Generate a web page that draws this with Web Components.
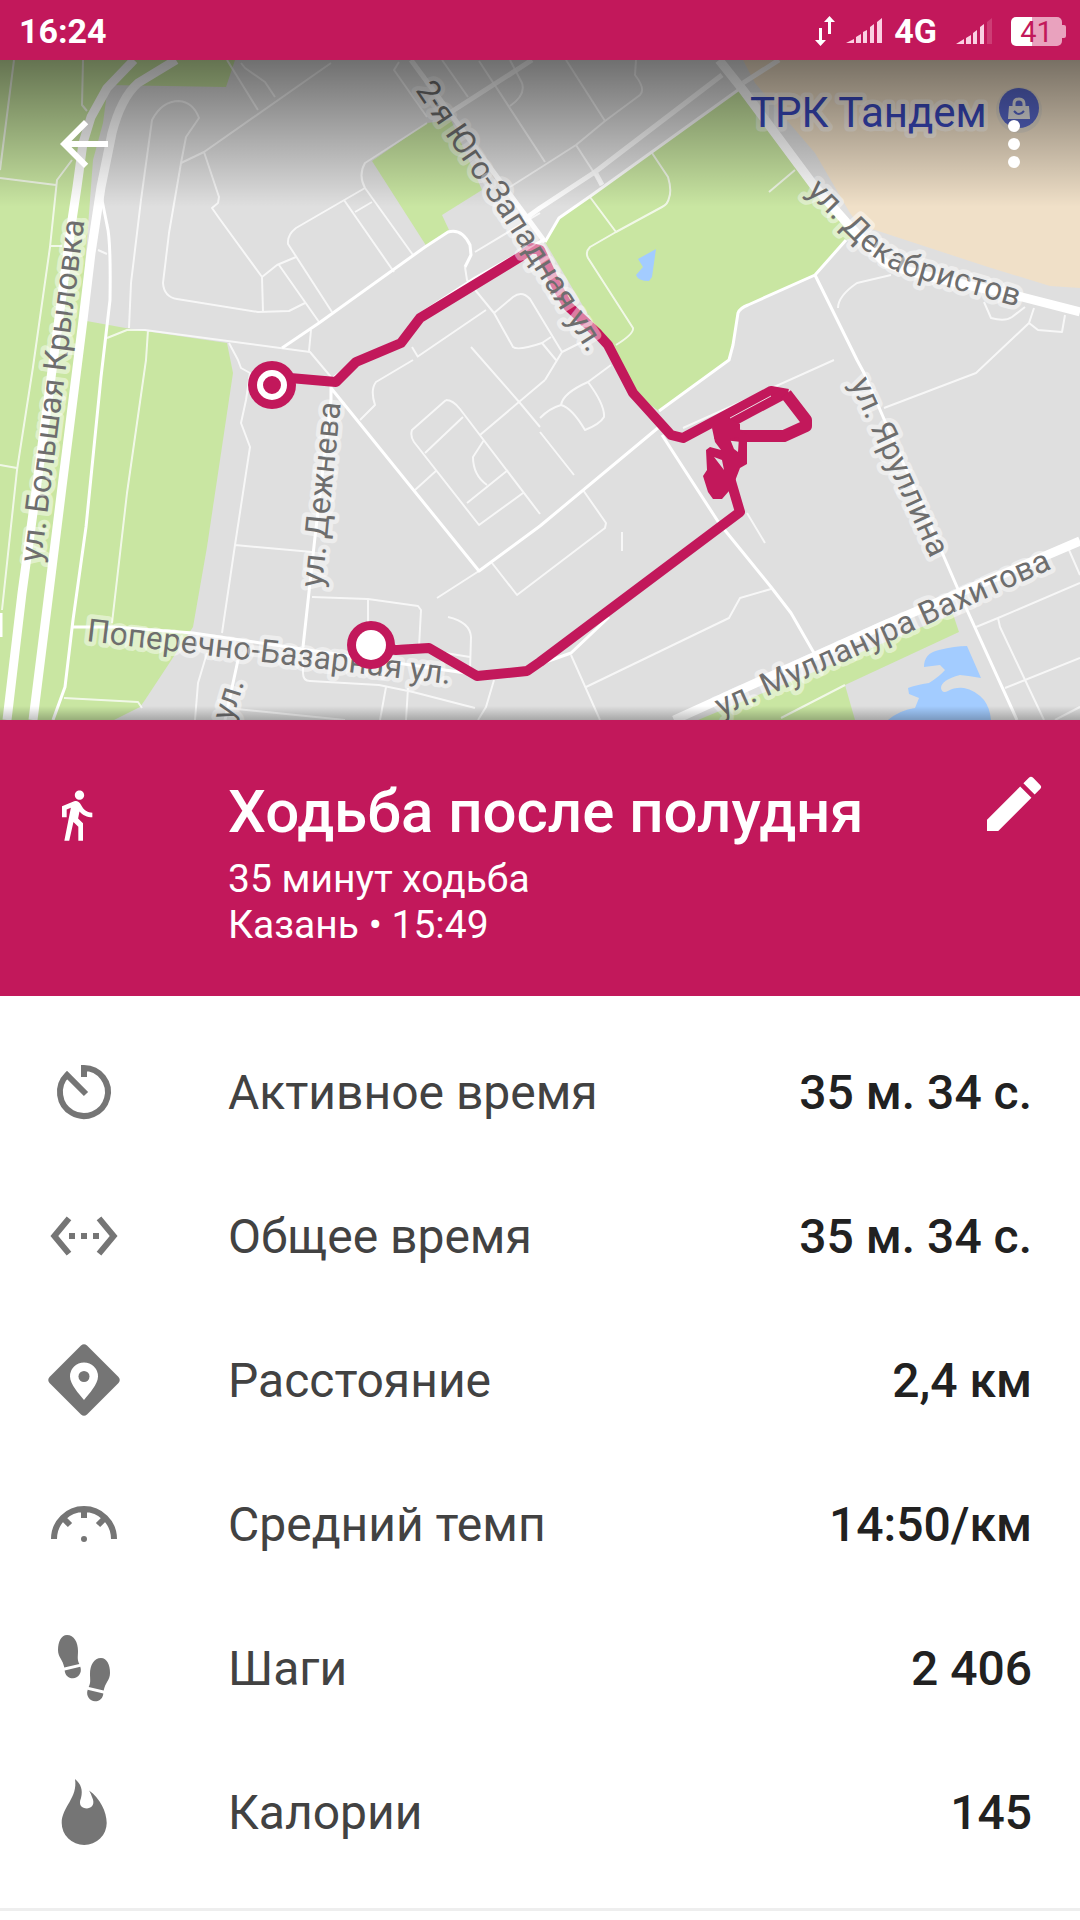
<!DOCTYPE html>
<html lang="ru">
<head>
<meta charset="utf-8">
<meta name="viewport" content="width=device-width, initial-scale=1">
<title>Ходьба после полудня</title>
<style>
  body {
    margin: 0;
    background: #fff;
    color: #212121;
    font-family: Roboto, "Noto Sans", sans-serif;
    --accent: #c2185b;
  }
</style>
</head>
<body>

<activity-page>
  <status-bar slot="status" time="16:24" network="4G" battery="41"></status-bar>
  <route-map slot="map"></route-map>
  <activity-header slot="header">
    <span slot="title">Ходьба после полудня</span>
    <span slot="duration">35 минут ходьба</span>
    <span slot="place">Казань • 15:49</span>
  </activity-header>
  <stat-row icon="timer"><span>Активное время</span><span slot="value">35 м. 34 с.</span></stat-row>
  <stat-row icon="span"><span>Общее время</span><span slot="value">35 м. 34 с.</span></stat-row>
  <stat-row icon="distance"><span>Расстояние</span><span slot="value">2,4 км</span></stat-row>
  <stat-row icon="pace"><span>Средний темп</span><span slot="value">14:50/км</span></stat-row>
  <stat-row icon="steps"><span>Шаги</span><span slot="value">2 406</span></stat-row>
  <stat-row icon="calories"><span>Калории</span><span slot="value">145</span></stat-row>
</activity-page>

<template id="page-template">
  <style>
    :host { display: block; }
    section {
      padding: 24px 0;
      border-bottom: 3px solid #eee;
    }
  </style>
  <slot name="status"></slot>
  <main>
    <slot name="map"></slot>
    <slot name="header"></slot>
    <section><slot></slot></section>
  </main>
</template>

<template id="status-template">
  <style>
    :host {
      display: flex;
      align-items: center;
      height: 60px;
      padding: 2px 14px 0 19px;
      box-sizing: border-box;
      background: var(--accent);
      color: #fff;
      font-size: 34px;
      font-weight: 700;
      line-height: 40px;
    }
    .time { flex: 1; }
    .icons { display: flex; align-items: center; }
    svg { display: block; }
    .arrows { margin-right: 11px; }
    .signal { margin-right: 12px; }
    .network { margin-right: 19px; }
    .second { margin-right: 19px; }
    .battery { display: flex; align-items: center; }
    .cell {
      width: 51px;
      height: 29px;
      border-radius: 5px;
      background: linear-gradient(90deg, #fff 41%, #e9a2be 41%);
      color: var(--accent);
      font-size: 29px;
      font-weight: 400;
      line-height: 30px;
      text-align: center;
    }
    .nub {
      width: 4px;
      height: 13px;
      border-radius: 0 2px 2px 0;
      background: #e9a2be;
    }
  </style>
  <span class="time"></span>
  <div class="icons">
    <svg class="arrows" width="20" height="30" viewBox="0 0 20 30" fill="#fff">
      <path d="M4 12h3v12h4l-5.500 6L0 24h4zM13 18h3V6h4l-5.500-6L9 6h4z"/>
    </svg>
    <svg class="signal" width="36" height="26" viewBox="0 0 36 26" fill="#fad0e2">
      <path d="M0 25l8-4v4zM10 19l5-3v9h-5zM17 14l4-2v13h-4zM24 9l4-3v19h-4zM31 4l5-4v25h-5z"/>
    </svg>
    <span class="network"></span>
    <svg class="second" width="36" height="26" viewBox="0 0 36 26" fill="#fad0e2">
      <path d="M0 26l8-5v5zM10 20l5-3v9h-5zM17 15l4-3v14h-4zM24 9l4-3v20h-4z"/>
      <path d="M31 4l5-4v26h-5z" opacity=".2"/>
    </svg>
    <div class="battery"><div class="cell"></div><div class="nub"></div></div>
  </div>
</template>

<template id="map-template">
  <style>
    :host {
      display: block;
      position: relative;
      background: #dfdfdf;
    }
    .map { display: block; width: 100%; height: auto; }
    .roads { fill: none; stroke: #fff; stroke-linejoin: round; }
    .small { stroke-width: 2; opacity: .75; }
    .mid { stroke-width: 3; }
    .wide { stroke-width: 5; opacity: .9; }
    .main { stroke-width: 9; }
    .route { fill: none; stroke: var(--accent); stroke-width: 10; stroke-linejoin: round; }
    text {
      font-size: 32px;
      fill: #6e6e6e;
      stroke: rgba(255, 255, 255, .45);
      stroke-width: 9px;
      stroke-linejoin: round;
      paint-order: stroke;
    }
    .poi { font-size: 42px; fill: #3948bd; }
    nav {
      position: absolute;
      top: 48px;
      left: 48px;
      right: 30px;
      display: flex;
      justify-content: space-between;
    }
    button {
      width: 72px;
      height: 72px;
      padding: 0;
      border: 0;
      background: none;
      cursor: pointer;
    }
    button svg { display: block; fill: #fff; }
  </style>
  <svg class="map" viewBox="0 60 1080 660" role="img" aria-label="Карта маршрута">
    <defs>
      <linearGradient id="shade" x1="0" y1="0" x2="0" y2="1">
        <stop offset="0" stop-opacity=".5"/>
        <stop offset="1" stop-opacity="0"/>
      </linearGradient>
      <linearGradient id="edge" x1="0" y1="0" x2="0" y2="1">
        <stop offset="0" stop-opacity="0"/>
        <stop offset="1" stop-opacity=".25"/>
      </linearGradient>
      <path id="l1" d="M41 563L87 200"/>
      <path id="l2" d="M415 90L503 219L600 372"/>
      <path id="l3" d="M806 192L834 220Q865 256 902 274L1050 316"/>
      <path id="l4" d="M850 383L945 590"/>
      <path id="l5" d="M721 717L1080 556"/>
      <path id="l6" d="M322 588L344 370"/>
      <path id="l7" d="M86 641L500 690"/>
      <path id="l8" d="M232 722L254 650"/>
    </defs>

    <!-- parks, mall, water -->
    <g fill="#c9e6a2">
      <path d="M0 60H235L226 87L108 85L103 123L93 160L81 320L131 329L227 343L233 373L220 460L207 547L193 627L176 653L145 700L140 707L114 720H0Z"/>
      <path d="M372 161L427 123L451 120L482 190L442 215L449 230L427 247Z"/>
      <path d="M738 90L592 195L559 218L545 242L599 333L633 393L659 411L729 360L733 345L738 313L748 305L815 275L846 240L860 235L795 167Z"/>
      <path d="M698 720L953 614L959 632L845 685L855 720Z"/>
    </g>
    <path fill="#f0e0c8" d="M743 60L755 83L815 153L850 213Q857 225 872 229L988 267L1050 286L1080 288V60Z"/>
    <g fill="#a3ccff">
      <path d="M656 249L638 259L643 267L636 275Q638 281 649 281L652 277Z"/>
      <path d="M924 667Q924 653 939 650Q955 646 967 646L981 678Q970 676 960 675Q941 680 941 688Q942 694 948 691Q955 687 964 688Q975 690 984 700Q990 708 991 720H888Q900 710 915 708L919 698L909 694L908 688Q916 685 929 683Q940 676 945 670L940 665Z"/>
    </g>

    <g class="roads small">
      <path d="M14 60L0 170M0 178L56 185M83 60L82 105L87 111M72 160L57 180L50 247L33 367L17 470L2 610M50 246H62M98 250L107 254"/>
      <path d="M129 328L131 283L141 200L152 120Q162 101 179 101Q193 102 199 118L186 137L181 163L169 233L163 283Q164 297 177 299L258 312L289 311L305 303"/>
      <path d="M227 60L258 110M241 63L245 68L265 82L275 97M331 63L204 152L181 163M204 152L219 197L218 203L212 208L219 218L262 277L263 312M262 277L277 265L296 257M279 265L319 322"/>
      <path d="M332 312L288 244Q287 235 296 228L365 188M344 200L394 272M355 212L372 202M427 123L365 163Q358 175 365 188L413 255M427 117L394 70L399 62"/>
      <path d="M465 267L467 280L494 313L513 347Q518 351 542 343L551 337M494 313L513 297Q522 290 530 299L562 352L545 380M486 310L417 357M412 347L418 357M471 347L520 403L540 427M562 352L590 338M542 343L556 360"/>
      <path d="M475 252L540 213M442 60L468 97M479 61L545 162M510 60L522 83Q526 95 510 106"/>
      <path d="M510 187L540 168L576 145L605 121L640 95Q646 89 635 75L636 60M566 60L605 121M576 145L602 185"/>
      <path d="M652 153L668 177Q672 190 669 198Q668 204 662 207L616 232L590 247Q585 252 588 258L633 328Q634 334 616 345M590 197L616 232M769 192L795 170"/>
      <path d="M838 308Q838 296 857 283L891 275M984 302L991 318Q1005 322 1012 317L1025 307M1034 308L1029 323L976 373L884 408M1029 323L1038 330L1062 332L1065 315M683 428L834 360"/>
      <path d="M747 513L765 543M771 589L740 598L729 618L586 687M571 655L600 720M583 490L606 523L605 528L517 595L492 563M479 571L437 598M611 365L588 382Q563 393 561 405Q550 408 540 418M561 405Q572 408 585 430Q600 424 604 417Q605 405 588 382M540 432L574 475M622 532V551"/>
      <path d="M413 360L376 382Q370 390 375 405L360 420M545 380L480 435M446 400L412 430Q410 436 414 442L479 525L523 493M446 400Q453 400 460 409L540 514M425 453L463 417M415 490L437 470M484 440L473 457Q473 475 487 485M508 470L467 503"/>
      <path d="M148 330L146 360L127 493L112 623M107 338L127 330H145L310 352L331 377M311 330L309 351M229 343L238 360L241 368L250 373L246 400L241 423L250 447L235 545L222 633M235 545L312 552"/>
      <path d="M312 597L368 599L418 606L421 610L419 647M368 599V623M448 617Q470 622 471 637L470 670M396 645L470 657M303 647V673Q303 681 310 681L379 685L413 692L475 708M207 653L198 683L195 720M64 698L138 702L142 708M227 708L345 720M386 687L380 720M408 688L406 720M494 680L486 707L478 720M0 465L17 468"/>
      <path d="M1069 550L1080 575M1080 583L998 618L976 627M998 618L1000 627L1044 720M1005 688L1080 658M1080 707L1055 720M781 718L845 685"/>
    </g>
    <g class="roads mid">
      <path d="M282 348L319 323L425 247L448 232Q462 228 470 245L471 255L465 267"/>
      <path d="M331 377V400L315 537L303 647M331 388L479 571L540 526L659 427M659 411L729 360L733 345L738 313Q740 308 748 305L815 275L846 240M738 90L592 195L559 218L545 242"/>
      <path d="M662 435L719 523L771 587L791 613L814 653M815 275L857 360L864 373L941 550L967 610L1017 720M540 664L571 653L609 617"/>
      <path d="M101 195L107 225Q111 240 110 300L101 377L86 527L73 620L65 687L53 720M73 627H114L193 633L479 675M238 660L225 720M1 613V637"/>
      <path d="M545 239L475 278L420 314L401 339L356 360L331 380"/>
    </g>
    <g class="roads wide">
      <path d="M522 221L540 208L595 172L722 75M451 112L532 60M743 83L779 60M595 172L602 185M411 60L545 242"/>
    </g>
    <g class="roads main">
      <path d="M134 60L107 88L91 117L83 143L77 187L72 220L33 513L22 593L7 720"/>
      <path d="M176 60L138 83Q121 98 112 133L101 187L91 253L83 320L62 487L48 600L33 720"/>
      <path d="M719 60L743 90L815 187L846 222L884 262Q900 270 940 279L1022 297L1080 312M674 720L884 625L1080 541"/>
    </g>

    <!-- walked route -->
    <g class="route">
      <path d="M290 378L336 382L356 362L401 343L420 318L520 257L532 248L540 250L556 285L568 306L598 334L608 345L633 393L671 435L683 438L771 391L788 394"/>
      <path d="M722 427L786 393"/>
      <path d="M786 394L806 420V426L784 436H742L715 433" stroke-width="12"/>
      <path d="M730 478L740 512L540 662L527 671L477 676L429 648L396 650L371 647"/>
      <path fill="#c2185b" fill-rule="evenodd" stroke="none" d="M712 428L725 416L740 424V431L747 434V464L740 468L735 481L729 491L722 499H713L708 492L703 476L707 470L706 450L710 447L721 450L715 442ZM730 439L739 437L738 452L734 449ZM714 457L722 460L724 470Z"/>
      <path stroke="#eadde2" stroke-width="1" d="M730 418L771 396"/>
    </g>

    <text><textPath href="#l1">ул. Большая Крыловка</textPath></text>
    <text><textPath href="#l2">2-я Юго-Западная ул.</textPath></text>
    <text><textPath href="#l3">ул. Декабристов</textPath></text>
    <text><textPath href="#l4">ул. Яруллина</textPath></text>
    <text><textPath href="#l5">ул. Мулланура Вахитова</textPath></text>
    <text><textPath href="#l6">ул. Дежнева</textPath></text>
    <text><textPath href="#l7">Поперечно-Базарная ул.</textPath></text>
    <text><textPath href="#l8">ул.</textPath></text>
    <text class="poi" x="750" y="127">ТРК Тандем</text>

    <g>
      <circle cx="1019" cy="110" r="23" fill="#d9d3c8" opacity=".7"/>
      <circle cx="1019" cy="108" r="20" fill="#5868cc"/>
      <path fill="#e4e4e4" d="M1009 106h20l1 13h-22z"/>
      <path fill="none" stroke="#e4e4e4" stroke-width="3" d="M1014 107v-3q0-5 5-5t5 5v3"/>
      <path fill="none" stroke="#5868cc" stroke-width="2" d="M1014 111q5 6 10 0"/>
    </g>

    <circle cx="272" cy="385" r="24" fill="#c2185b"/>
    <circle cx="272" cy="385" r="12" fill="none" stroke="#fff" stroke-width="6"/>
    <circle cx="371" cy="645" r="24" fill="#c2185b"/>
    <circle cx="371" cy="645" r="15" fill="#fff"/>

    <rect x="0" y="60" width="1080" height="147" fill="url(#shade)"/>
    <rect x="0" y="706" width="1080" height="14" fill="url(#edge)"/>
  </svg>
  <nav>
    <button type="button" aria-label="Назад">
      <svg width="72" height="72" viewBox="0 0 24 24"><path d="M20 11H7.830l5.590-5.590L12 4l-8 8 8 8 1.410-1.410L7.830 13H20v-2z"/></svg>
    </button>
    <button type="button" aria-label="Ещё">
      <svg width="72" height="72" viewBox="0 0 24 24"><circle cx="12" cy="6" r="2"/><circle cx="12" cy="12" r="2"/><circle cx="12" cy="18" r="2"/></svg>
    </button>
  </nav>
</template>

<template id="header-template">
  <style>
    :host {
      display: grid;
      grid-template-columns: 180px 1fr 72px;
      align-items: start;
      padding: 48px 30px 48px 48px;
      background: var(--accent);
      color: #fff;
    }
    svg { display: block; fill: #fff; }
    .walk { margin-top: 19px; }
    h1 {
      margin: 9px 0;
      font-size: 60px;
      font-weight: 500;
      line-height: 70px;
    }
    p {
      margin: 0;
      font-size: 39px;
      line-height: 46px;
    }
    button {
      width: 72px;
      height: 72px;
      padding: 0;
      border: 0;
      background: none;
      cursor: pointer;
    }
  </style>
  <svg class="walk" width="56" height="56" viewBox="0 0 24 24"><path d="M13.500 5.500c1.100 0 2-.9 2-2s-.9-2-2-2-2 .9-2 2 .9 2 2 2zM9.800 8.900L7 23h2.100l1.800-8 2.100 2v6h2v-7.500l-2.100-2 .6-3C14.800 12 16.800 13 19 13v-2c-1.900 0-3.500-1-4.300-2.400l-1-1.600c-.4-.6-1-1-1.700-1-.3 0-.5.1-.8.1L6 8.300V13h2V9.600l1.800-.7"/></svg>
  <div>
    <h1><slot name="title"></slot></h1>
    <p><slot name="duration"></slot></p>
    <p><slot name="place"></slot></p>
  </div>
  <button type="button" aria-label="Изменить">
    <svg width="72" height="72" viewBox="0 0 24 24"><path d="M3 17.250V21h3.750L17.810 9.940l-3.750-3.750L3 17.250zM20.710 7.040a1 1 0 0 0 0-1.410l-2.340-2.340a1 1 0 0 0-1.410 0l-1.830 1.830 3.750 3.750 1.830-1.830z"/></svg>
  </button>
</template>

<template id="row-template">
  <style>
    :host {
      display: grid;
      grid-template-columns: 180px 1fr auto;
      align-items: center;
      min-height: 144px;
      padding: 0 48px;
      box-sizing: border-box;
      font-size: 48px;
      line-height: 56px;
    }
    svg { display: block; color: #757575; fill: currentColor; }
    span { padding-top: 2px; }
    .label { color: #424242; }
    .value { font-weight: 500; }
  </style>
  <svg width="72" height="72" viewBox="0 0 72 72"></svg>
  <span class="label"><slot></slot></span>
  <span class="value"><slot name="value"></slot></span>
</template>

<script>
const icons = {
  timer: `<path fill="none" stroke="currentColor" stroke-width="6" d="M36 21V12A24 24 0 1 1 19 19L38 38"/>`,
  span: `<path transform="scale(3)" d="M7.770 6.760L6.230 5.480.820 12l5.410 6.520 1.540-1.280L3.420 12l4.350-5.240zM7 13h2v-2H7v2zm10-2h-2v2h2v-2zm-6 2h2v-2h-2v2zm6.770-7.520l-1.540 1.280L20.580 12l-4.350 5.240 1.540 1.280L23.180 12l-5.410-6.520z"/>`,
  distance: `
    <path fill-rule="evenodd" d="M33 1.500Q36-1 39 1.500L70.500 33Q73 36 70.500 39L39 70.500Q36 73 33 70.500L1.500 39Q-1 36 1.500 33ZM36 56C31 50 22 40 22 32.500A14 14 0 0 1 50 32.500C50 40 41 50 36 56Z"/>
    <circle cx="36" cy="32.500" r="5.500"/>`,
  pace: `
    <path fill="none" stroke="currentColor" stroke-width="6" d="M6 51A30 30 0 0 1 66 51M36 20V30M14 29L22 37M58 29L50 37"/>
    <circle cx="36" cy="51" r="3"/>`,
  steps: `
    <path id="foot" d="M19 3C13 3 10 10 10 18C10 25 15 28 16.300 35.500L31.300 32C29 27 30 25 30 19C30 10 26 3 19 3ZM16.700 38.500L32.300 34.800C34.500 41 30 46.300 25 46.300C20 46.300 17 43 16.700 38.500Z"/>
    <use href="#foot" transform="translate(72 23) scale(-1 1)"/>`,
  calories: `<path d="M27 3C33 8 35 14 33 22C30 29 34 32.500 39 32.500C45 32 47 27 44 21C43 18 42 16 41 14.500C52 22 58.700 36 58.700 47A22.500 22 0 0 1 13.700 47C13.700 31 30 22 27 3Z"/>`,
};

function attach(host, id) {
  const root = host.attachShadow({ mode: "open" });
  root.append(document.getElementById(id).content.cloneNode(true));
  return root;
}

class ActivityPage extends HTMLElement {
  constructor() {
    super();
    attach(this, "page-template");
  }
}

class StatusBar extends HTMLElement {
  constructor() {
    super();
    attach(this, "status-template");
  }

  connectedCallback() {
    this.show(".time", "time");
    this.show(".network", "network");
    this.show(".cell", "battery");
  }

  show(selector, name) {
    this.shadowRoot.querySelector(selector).textContent = this.getAttribute(name);
  }
}

class RouteMap extends HTMLElement {
  constructor() {
    super();
    attach(this, "map-template");
  }
}

class ActivityHeader extends HTMLElement {
  constructor() {
    super();
    attach(this, "header-template");
  }
}

class StatRow extends HTMLElement {
  constructor() {
    super();
    attach(this, "row-template");
  }

  connectedCallback() {
    this.shadowRoot.querySelector("svg").innerHTML = icons[this.getAttribute("icon")];
  }
}

customElements.define("activity-page", ActivityPage);
customElements.define("status-bar", StatusBar);
customElements.define("route-map", RouteMap);
customElements.define("activity-header", ActivityHeader);
customElements.define("stat-row", StatRow);
</script>
</body>
</html>
